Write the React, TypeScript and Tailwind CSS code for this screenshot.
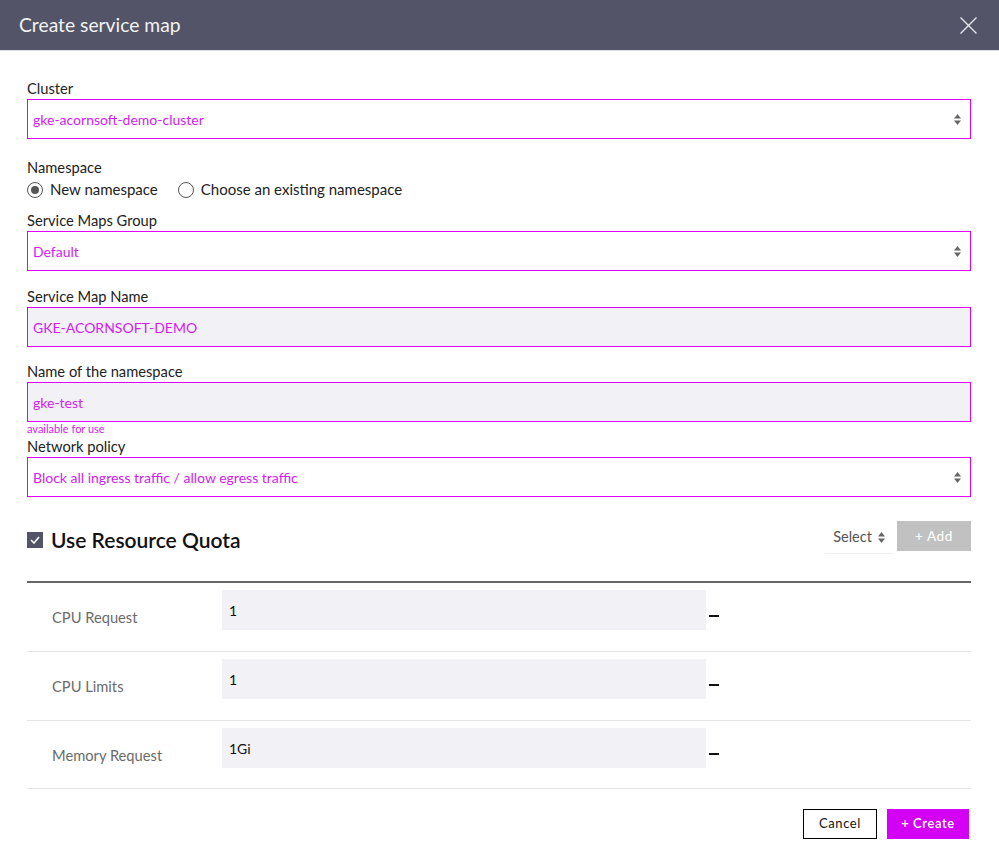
import React from 'react';

const magenta = 'text-[#d21cf0]';

function SortArrows({ className = '' }: { className?: string }) {
  return (
    <svg width="7" height="11" viewBox="0 0 7 11" className={className}>
      <path d="M3.5 0 L7 4.5 H0 Z" fill="#666" />
      <path d="M3.5 11 L7 6.5 H0 Z" fill="#666" />
    </svg>
  );
}

function SelectBox({ value }: { value: string }) {
  return (
    <div className="h-10 border border-[#e100ff] bg-white flex items-center justify-between pl-[5px] pr-[9px]">
      <span className={`text-[14px] ${magenta}`}>{value}</span>
      <SortArrows />
    </div>
  );
}

function TextBox({ value }: { value: string }) {
  return (
    <div className="h-10 border border-[#e100ff] bg-[#f2f1f6] flex items-center pl-[5px]">
      <span className={`text-[14px] ${magenta}`}>{value}</span>
    </div>
  );
}

function Label({ children }: { children: React.ReactNode }) {
  return <div className="text-[14.7px] leading-5 text-[#222] mb-px">{children}</div>;
}

const quotaRows = [
  { name: 'CPU Request', value: '1' },
  { name: 'CPU Limits', value: '1' },
  { name: 'Memory Request', value: '1Gi' },
];

export default function App() {
  return (
    <div className="w-[999px] h-[867px] bg-white font-['Lato','Noto_Sans',sans-serif] overflow-hidden">
      {/* Header */}
      <div className="h-[50px] bg-[#535468] flex items-center justify-between pl-[19px] pr-[22px] border-b border-[#dfe2ea] box-content">
        <h1 className="text-[19.3px] text-[#f2f2f2]">Create service map</h1>
        <svg width="17" height="17" viewBox="0 0 17 17">
          <path d="M0.5 0.5 L16.5 16.5 M16.5 0.5 L0.5 16.5" stroke="#e4e4ea" strokeWidth="1.4" />
        </svg>
      </div>

      <div className="pl-[27px] pr-[28px] pt-[27px]">
        <Label>Cluster</Label>
        <SelectBox value="gke-acornsoft-demo-cluster" />

        <div className="mt-[18px]">
          <Label>Namespace</Label>
          <div className="flex items-center h-5 mt-[2px] text-[15px] text-[#222] pt-px">
            <span className="w-4 h-4 rounded-full border border-[#555] flex items-center justify-center">
              <span className="w-2 h-2 rounded-full bg-[#555]" />
            </span>
            <span className="ml-[7px]">New namespace</span>
            <span className="ml-[20px] w-4 h-4 rounded-full border border-[#555]" />
            <span className="ml-[7px]">Choose an existing namespace</span>
          </div>
        </div>

        <div className="mt-[11px]">
          <Label>Service Maps Group</Label>
          <SelectBox value="Default" />
        </div>

        <div className="mt-[15px]">
          <Label>Service Map Name</Label>
          <TextBox value="GKE-ACORNSOFT-DEMO" />
        </div>

        <div className="mt-[14px]">
          <Label>Name of the namespace</Label>
          <TextBox value="gke-test" />
        </div>
        <div className={`text-[11px] leading-[14px] ${magenta}`}>available for use</div>

        <div>
          <Label>Network policy</Label>
          <SelectBox value="Block all ingress traffic / allow egress traffic" />
        </div>

        {/* Resource quota */}
        <div className="flex items-start justify-between mt-6 h-[60px]">
          <div className="flex items-center gap-2 mt-[3px]">
            <span className="w-4 h-4 bg-[#535468] flex items-center justify-center">
              <svg width="10" height="8" viewBox="0 0 10 8">
                <path d="M1 4 L4 7 L9 1" stroke="#fff" strokeWidth="1.6" fill="none" />
              </svg>
            </span>
            <span className="text-[21px] font-semibold text-[#111]">Use Resource Quota</span>
          </div>
          <div className="flex items-start gap-[4px]">
            <div className="w-[68px] h-[33px] border-b border-[#eeeeee] flex items-center justify-center gap-[6px] text-[14.5px] text-[#555]">
              <span>Select</span>
              <SortArrows />
            </div>
            <button className="w-[74px] h-[30px] bg-[#c1c1c1] text-[13.5px] font-medium text-white tracking-[0.6px]">
              + Add
            </button>
          </div>
        </div>

        <div className="border-t-2 border-[#666]">
          {quotaRows.map((row, i) => (
            <div
              key={row.name}
              className={`flex items-start border-b border-[#e5e5e5] ${i === quotaRows.length - 1 ? 'h-[68px]' : 'h-[69px]'}`}
            >
              <div className="w-[195px] pt-[24px] pl-[25px] text-[14.7px] leading-5 text-[#6b6b6b]">
                {row.name}
              </div>
              <div className="mt-[7px] w-[484px] h-10 bg-[#f2f1f6] flex items-center pl-[7px] text-[14px] text-[#111]">
                {row.value}
              </div>
              <span className="ml-[3px] mt-[32px] w-[10px] h-[2px] bg-[#111]" />
            </div>
          ))}
        </div>

        <div className="flex justify-end gap-[10px] mt-5 pr-[2px]">
          <button className="w-[74px] h-[30px] border border-black text-[13px] text-[#111] tracking-[0.6px]">
            Cancel
          </button>
          <button className="w-[82px] h-[30px] bg-[#d400f6] text-[13px] font-semibold text-white tracking-[0.6px]">
            + Create
          </button>
        </div>
      </div>
    </div>
  );
}
